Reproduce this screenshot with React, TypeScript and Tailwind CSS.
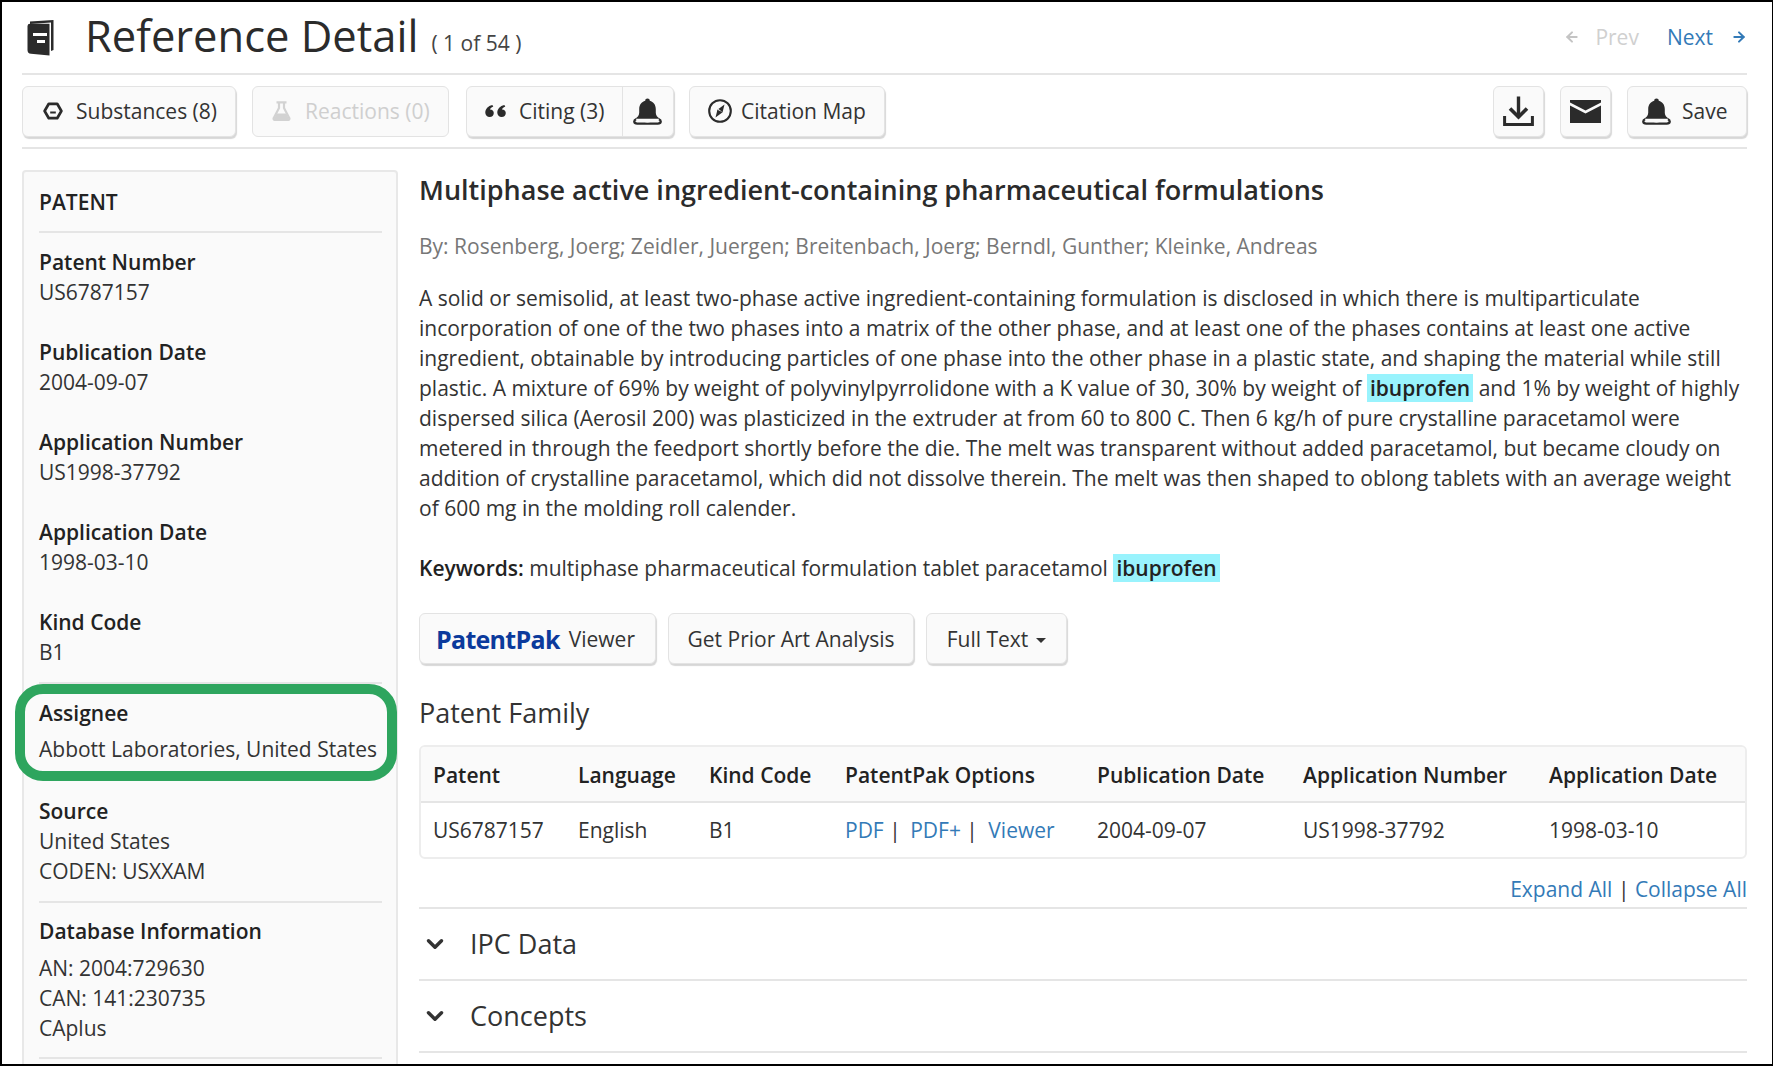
import React from "react";
import { LuChevronDown, LuArrowLeft, LuArrowRight } from "react-icons/lu";

const link = "text-[#337ab7]";
const btn = "flex items-center h-[51px] rounded-[6px] border border-[#e3e3e3] bg-[#fafafa] shadow-[1px_2px_1px_rgba(0,0,0,0.16)] text-[#333]";

function BookIcon() {
  return (
    <svg width="27" height="36" viewBox="0 0 27 36" className="shrink-0">
      <path d="M3 1.5 L26.5 0 V30 L24 31 V2.6 L3 4 Z" fill="#2b2b2b" />
      <path d="M0.5 6 Q0.5 3.8 3 3.8 L22.5 3.8 V35.5 L4 33.8 Q0.5 33.4 0.5 30 Z" fill="#2b2b2b" />
      <rect x="6" y="13" width="14" height="3" fill="#fff" />
      <rect x="10" y="20" width="8" height="3" fill="#fff" />
    </svg>
  );
}

function HexIcon() {
  return (
    <svg width="20" height="18" viewBox="0 0 20 18" className="shrink-0">
      <path d="M5.8 1.8 H14.2 L18.4 9 L14.2 16.2 H5.8 L1.6 9 Z" fill="none" stroke="#2b2b2b" strokeWidth="2.7" strokeLinejoin="round" />
      <rect x="7.2" y="9.5" width="5.6" height="2" fill="#2b2b2b" />
    </svg>
  );
}

function FlaskIcon() {
  return (
    <svg width="19" height="20" viewBox="0 0 19 20" className="shrink-0">
      <path d="M4.5 1.4H14.5M7 1.4V7L1.8 17a1.2 1.2 0 0 0 1 1.9H16.2a1.2 1.2 0 0 0 1-1.9L12 7V1.4" fill="none" stroke="#d2d2d2" strokeWidth="2.2" />
      <path d="M4.6 12.5H14.4L17 18H2Z" fill="#d2d2d2" />
    </svg>
  );
}

function QuoteIcon() {
  const d = "M4.6 12a4.3 4.3 0 0 1-4.3-4.4C0.3 4 3 1 7.3 0l1 1.5C6.2 2.5 5.2 3.5 5 4.6a3.8 3.8 0 0 1 3.8 3.5A4.2 4.2 0 0 1 4.6 12Z";
  return (
    <svg width="21" height="12" viewBox="0 0 21 12" fill="#2b2b2b" className="shrink-0">
      <path d={d} />
      <path d={d} transform="translate(12 0)" />
    </svg>
  );
}

function BellIcon() {
  return (
    <svg width="29" height="27" viewBox="0 0 28 26" className="shrink-0" fill="#2b2b2b">
      <path d="M14 0.5c1.3 0 2.2.9 2.2 2.1 3.6 1 5.8 4 5.8 8v3.5c0 2.6 1.5 4.3 4 5.9H2c2.5-1.6 4-3.3 4-5.9v-3.5c0-4 2.2-7 5.8-8 0-1.2.9-2.1 2.2-2.1z" />
      <path d="M3 20.5C0.5 21.5 0.5 24.6 4 24.6H24C27.5 24.6 27.5 21.5 25 20.5" fill="none" stroke="#2b2b2b" strokeWidth="2.2" />
      <path d="M10.5 20.5a3.5 2.6 0 0 0 7 0" fill="none" stroke="#fafafa" strokeWidth="1.2" />
    </svg>
  );
}

function CompassIcon() {
  return (
    <svg width="24" height="24" viewBox="0 0 24 24" className="shrink-0">
      <circle cx="12" cy="12" r="10.8" fill="none" stroke="#2b2b2b" strokeWidth="2.1" />
      <path d="M16.5 5.5 L14.6 13.2 L7.5 18.5 L9.4 10.8 Z" fill="#2b2b2b" />
      <path d="M14.6 13.2 L9.4 10.8 L10.5 10 Z" fill="#fafafa" />
    </svg>
  );
}

function DownloadIcon() {
  return (
    <svg width="31" height="31" viewBox="0 0 31 31" fill="none" stroke="#2b2b2b" className="shrink-0">
      <path d="M15.5 0.5V20" strokeWidth="3.4" />
      <path d="M7 12.5L15.5 21L24 12.5" strokeWidth="3.6" />
      <path d="M1.6 20V28.5H29.4V20" strokeWidth="3" />
    </svg>
  );
}

function MailIcon() {
  return (
    <svg width="31" height="23" viewBox="0 0 31 23" fill="#2b2b2b" className="shrink-0">
      <path d="M0 0H31V2.5L15.5 10.5L0 2.5Z" />
      <path d="M0 5.5L15.5 13.5L31 5.5V23H0Z" />
    </svg>
  );
}

function Field({ label, children, last }: { label: string; children: React.ReactNode; last?: boolean }) {
  return (
    <div className={last ? "" : "mb-[30px]"}>
      <div className="font-semibold text-[#222]">{label}</div>
      <div>{children}</div>
    </div>
  );
}

const lines = [
  "A solid or semisolid, at least two-phase active ingredient-containing formulation is disclosed in which there is multiparticulate incorporation of one of the two phases into a matrix of the other phase, and at least one of the phases contains at least one active ingredient, obtainable by introducing particles of one phase into the other phase in a plastic state, and shaping the material while still plastic. A mixture of 69% by weight of polyvinylpyrrolidone with a K value of 30, 30% by weight of ",
  " and 1% by weight of highly dispersed silica (Aerosil 200) was plasticized in the extruder at from 60 to 800 C. Then 6 kg/h of pure crystalline paracetamol were metered in through the feedport shortly before the die. The melt was transparent without added paracetamol, but became cloudy on addition of crystalline paracetamol, which did not dissolve therein. The melt was then shaped to oblong tablets with an average weight of 600 mg in the molding roll calender.",
];

function Mark() {
  return <span className="bg-[#99f3fd] font-semibold px-[3px] text-[#222]">ibuprofen</span>;
}

export default function App() {
  return (
    <div className="h-[1066px] w-[1773px] overflow-hidden bg-white border-t-2 border-l-2 border-r border-b-2 border-black text-[21px] leading-[30px] text-[#333] font-['Open_Sans','Noto_Sans',sans-serif]">
      <div className="pl-[20px] pr-[25px]">
        <header className="flex items-center h-[73px] border-b-2 border-[#e5e5e5]">
          <div className="ml-[5px] w-[58px]"><BookIcon /></div>
          <h1 className="text-[43.5px] leading-[60px] text-[#2b2b2b] -mt-[4px]">Reference Detail</h1>
          <span className="ml-[13px] mt-[10px] text-[#444]">( 1 of 54 )</span>
          <div className="ml-auto flex items-center -mt-[2px]">
            <LuArrowLeft size={16} strokeWidth={3} className="text-[#c4c4c4]" />
            <span className="ml-[15px] text-[#d0d0d0]">Prev</span>
            <span className={"ml-[28px] " + link}>Next</span>
            <LuArrowRight size={16} strokeWidth={3} className={"ml-[18px] " + link} />
          </div>
        </header>

        <div className="flex items-center gap-[16px] h-[74px] border-b-2 border-[#e5e5e5]">
          <button className={btn + " w-[214px] pl-[20px]"}><HexIcon /><span className="ml-[13px]">Substances (8)</span></button>
          <button className={btn + " w-[197px] pl-[19px] !shadow-none text-[#cfcfcf]"}><FlaskIcon /><span className="ml-[14px]">Reactions (0)</span></button>
          <div className={btn + " w-[208px] ml-[1px]"}>
            <div className="flex items-center pl-[18px] w-[156px] h-full border-r border-[#e3e3e3]">
              <QuoteIcon /><span className="ml-[13px]">Citing (3)</span>
            </div>
            <span className="ml-[10px]"><BellIcon /></span>
          </div>
          <button className={btn + " w-[196px] pl-[18px] ml-[-1px]"}><CompassIcon /><span className="ml-[9px]">Citation Map</span></button>
          <div className="ml-auto flex items-center gap-[16px]">
            <button className={btn + " w-[51px] justify-center"}><DownloadIcon /></button>
            <button className={btn + " w-[51px] justify-center"}><MailIcon /></button>
            <button className={btn + " w-[120px] pl-[14px]"}><BellIcon /><span className="ml-[11px]">Save</span></button>
          </div>
        </div>

        <div className="flex mt-[21px] gap-[21px]">
          <aside className="relative w-[376px] shrink-0 h-[1000px] rounded-t-[4px] border-2 border-[#e8e8e8] bg-[#fafafa] pl-[15px] pr-[14px] pt-[15px]">
            <div className="pb-[14px] border-b-2 border-[#e5e5e5] text-[#222] font-semibold">PATENT</div>
            <div className="pt-[14px]">
              <Field label="Patent Number">US6787157</Field>
              <Field label="Publication Date">2004-09-07</Field>
              <Field label="Application Number">US1998-37792</Field>
              <Field label="Application Date">1998-03-10</Field>
              <Field label="Kind Code" last>B1</Field>
            </div>
            <div className="mt-[15px] border-t-2 border-[#e5e5e5] pt-[14px]">
              <div className="font-semibold text-[#222]">Assignee</div>
              <div className="mt-[6px] whitespace-nowrap">Abbott Laboratories, United States</div>
            </div>
            <div className="absolute left-[-9px] top-[512px] h-[97px] w-[382px] rounded-[28px] border-[10px] border-[#2ea55e]" />
            <div className="mt-[32px] pb-[15px] border-b-2 border-[#e5e5e5]">
              <div className="font-semibold text-[#222]">Source</div>
              <div>United States</div>
              <div>CODEN: USXXAM</div>
            </div>
            <div className="pt-[13px] pb-[14px] border-b-2 border-[#e5e5e5]">
              <div className="font-semibold text-[#222] mb-[7px]">Database Information</div>
              <div>AN: 2004:729630</div>
              <div>CAN: 141:230735</div>
              <div>CAplus</div>
            </div>
          </aside>

          <main className="flex-1 min-w-0">
            <h2 className="text-[27px] leading-[36px] font-semibold text-[#2b2b2b] mt-[2px]">Multiphase active ingredient-containing pharmaceutical formulations</h2>
            <p className="mt-[23px] text-[#777]">By: Rosenberg, Joerg; Zeidler, Juergen; Breitenbach, Joerg; Berndl, Gunther; Kleinke, Andreas</p>
            <p className="mt-[22px]">{lines[0]}<Mark />{lines[1]}</p>
            <p className="mt-[30px]"><b className="font-semibold text-[#222]">Keywords:</b> multiphase pharmaceutical formulation tablet paracetamol <Mark /></p>

            <div className="mt-[30px] flex gap-[12px]">
              <button className={btn + " w-[237px] pl-[16px]"}>
                <span className="text-[25px] font-bold text-[#0b3a9c] tracking-[-0.7px]">PatentPak</span><span className="ml-[9px]">Viewer</span>
              </button>
              <button className={btn + " w-[246px] justify-center"}>Get Prior Art Analysis</button>
              <button className={btn + " w-[141px] justify-center"}>Full Text<span className="ml-[8px] mt-[3px] border-x-[5px] border-t-[5px] border-x-transparent border-t-[#333]" /></button>
            </div>

            <h3 className="mt-[31px] text-[27px] leading-[36px] text-[#333]">Patent Family</h3>

            <div className="mt-[14px] rounded-[6px] border-2 border-[#ededed] overflow-hidden">
              <table className="w-full table-fixed text-left">
                <thead className="bg-[#fafafa]">
                  <tr className="h-[55px] border-b-2 border-[#e5e5e5] text-[#222]">
                    <th className="w-[157px] pl-[12px] pt-[2px] font-semibold">Patent</th>
                    <th className="w-[131px] pt-[2px] font-semibold">Language</th>
                    <th className="w-[136px] pt-[2px] font-semibold">Kind Code</th>
                    <th className="w-[252px] pt-[2px] font-semibold">PatentPak Options</th>
                    <th className="w-[206px] pt-[2px] font-semibold">Publication Date</th>
                    <th className="w-[246px] pt-[2px] font-semibold">Application Number</th>
                    <th className="pt-[2px] font-semibold">Application Date</th>
                  </tr>
                </thead>
                <tbody>
                  <tr className="h-[55px]">
                    <td className="pl-[12px]">US6787157</td>
                    <td>English</td>
                    <td>B1</td>
                    <td><span className={link}>PDF</span> | <span className={link + " ml-[4px]"}>PDF+</span> | <span className={link + " ml-[5px]"}>Viewer</span></td>
                    <td>2004-09-07</td>
                    <td>US1998-37792</td>
                    <td>1998-03-10</td>
                  </tr>
                </tbody>
              </table>
            </div>

            <div className="mt-[15px] text-right"><span className={link}>Expand All</span> | <span className={link}>Collapse All</span></div>

            <div className="mt-[3px] border-t-2 border-[#e5e5e5]">
              {["IPC Data", "Concepts"].map((t) => (
                <div key={t} className="flex items-center h-[72px] border-b-2 border-[#e5e5e5]">
                  <LuChevronDown size={26} strokeWidth={3.2} className="ml-[3px] text-[#333]" />
                  <span className="ml-[22px] text-[27px]">{t}</span>
                </div>
              ))}
            </div>
          </main>
        </div>
      </div>
    </div>
  );
}
